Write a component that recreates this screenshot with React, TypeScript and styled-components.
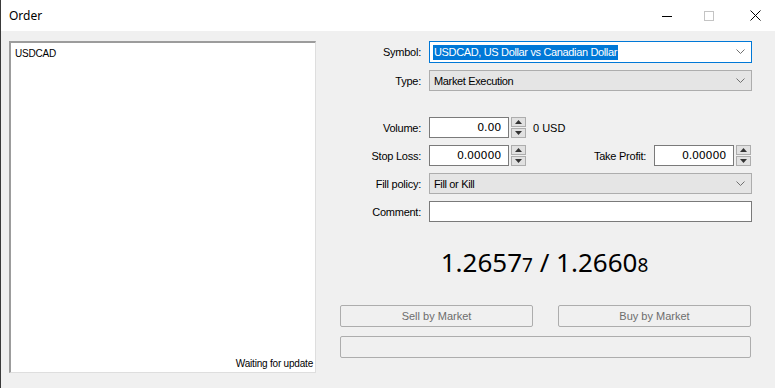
import React from "react";
import styled, { createGlobalStyle } from "styled-components";

const Global = createGlobalStyle`
  html, body { margin: 0; padding: 0; background: #f0f0f0; }
  body { font-family: "Liberation Sans", Arial, sans-serif; font-size: 11px; color: #000; }
  * { box-sizing: border-box; }
`;

const Window = styled.div`
  width: 775px;
  height: 388px;
  display: flex;
  flex-direction: column;
  background: #f0f0f0;
  border-left: 1px solid #3a3a3a;
  overflow: hidden;
`;

const TitleBar = styled.div`
  height: 31px;
  flex: none;
  background: #fff;
  display: flex;
  align-items: center;
  padding-left: 8px;
`;

const Title = styled.div`
  flex: 1;
  font-family: "Noto Sans", "Open Sans", sans-serif;
  font-size: 12px;
  color: #000;
`;

const WinButton = styled.div<{ $w: number; $pl?: number }>`
  width: ${(p) => p.$w}px;
  height: 31px;
  padding-left: ${(p) => p.$pl ?? 0}px;
  display: flex;
  align-items: center;
  justify-content: center;
`;

const Body = styled.div`
  flex: 1;
  display: flex;
  padding: 10px 23px 15px 8px;
  gap: 24px;
`;

const LeftPanel = styled.div`
  width: 307px;
  background: #fff;
  border-style: solid;
  border-width: 2px 1px 1px 2px;
  border-color: #9c9c9c #dedede #dedede #9c9c9c;
  display: flex;
  flex-direction: column;
  justify-content: space-between;
  padding: 4px 2px 2px 4px;
`;

const PanelText = styled.div<{ $right?: boolean }>`
  text-align: ${(p) => (p.$right ? "right" : "left")};
  font-size: 10px;
  letter-spacing: -0.2px;
  line-height: 13px;
`;

const RightCol = styled.div`
  flex: 1;
  display: flex;
  flex-direction: column;
`;

const Row = styled.div<{ $mt?: number }>`
  display: flex;
  align-items: center;
  height: 21px;
  margin-top: ${(p) => p.$mt ?? 7}px;
`;

const Label = styled.div<{ $w?: number }>`
  width: ${(p) => p.$w ?? 81}px;
  text-align: right;
  margin-right: 8px;
  flex: none;
  white-space: nowrap;
  letter-spacing: -0.25px;
`;

const Combo = styled.div<{ $focus?: boolean }>`
  flex: 1;
  height: ${(p) => (p.$focus ? 22 : 21)}px;
  display: flex;
  align-items: center;
  padding: 0 6px 0 3px;
  background: ${(p) => (p.$focus ? "#fff" : "#e5e5e5")};
  border: 1px solid ${(p) => (p.$focus ? "#0078d7" : "#adadad")};
`;

const ComboText = styled.span<{ $sel?: boolean }>`
  flex: 1;
  white-space: nowrap;
  letter-spacing: -0.35px;
  span {
    background: ${(p) => (p.$sel ? "#0078d7" : "transparent")};
    color: ${(p) => (p.$sel ? "#fff" : "#000")};
    padding: 1px 1px 2px 1px;
  }
`;

const TextInput = styled.div<{ $w?: number }>`
  width: ${(p) => (p.$w ? `${p.$w}px` : "auto")};
  flex: ${(p) => (p.$w ? "none" : "1")};
  height: 21px;
  background: #fff;
  border: 1px solid #7a7a7a;
  display: flex;
  align-items: center;
  justify-content: flex-end;
  padding: 0 7px;
  font-family: "DejaVu Sans", sans-serif;
  font-size: 11px;
  letter-spacing: -0.2px;
`;

const Spinner = styled.div`
  width: 15px;
  height: 21px;
  margin-left: 2px;
  flex: none;
  display: flex;
  flex-direction: column;
  gap: 1px;
`;

const SpinHalf = styled.div`
  flex: 1;
  background: #e1e1e1;
  border: 1px solid #adadad;
  display: flex;
  align-items: center;
  justify-content: center;
`;

const Suffix = styled.div`
  margin-left: 7px;
`;

const Spacer = styled.div<{ $w?: number }>`
  flex: ${(p) => (p.$w ? "none" : "1")};
  width: ${(p) => (p.$w ? `${p.$w}px` : "auto")};
`;

const Price = styled.div`
  margin-top: 25px;
  text-align: center;
  font-family: "Noto Sans", "Open Sans", sans-serif;
  font-size: 26px;
  line-height: 30px;
  color: #000;
  padding-right: 3px;
`;

const Small = styled.span`
  font-size: 19px;
`;

const Buttons = styled.div`
  margin-top: 25px;
  display: flex;
  gap: 25px;
  padding-right: 1px;
`;

const Btn = styled.div`
  flex: 1;
  height: 22px;
  border: 1px solid #adadad;
  border-radius: 2px;
  background: #f0f0f0;
  color: #6d6d6d;
  display: flex;
  align-items: center;
  justify-content: center;
`;

const Progress = styled.div`
  margin-top: 9px;
  margin-right: 1px;
  height: 22px;
  border: 1px solid #adadad;
  border-radius: 2px;
  background: #f0f0f0;
`;

const Chevron = () => (
  <svg width="9" height="5" viewBox="0 0 9 5">
    <path d="M0.5 0.5 L4.5 4.5 L8.5 0.5" fill="none" stroke="#707070" strokeWidth="1" />
  </svg>
);

const Spin = () => (
  <Spinner>
    <SpinHalf>
      <svg width="7" height="4" viewBox="0 0 7 4">
        <path d="M0 4 L3.5 0 L7 4 Z" fill="#333" />
      </svg>
    </SpinHalf>
    <SpinHalf>
      <svg width="7" height="4" viewBox="0 0 7 4">
        <path d="M0 0 L3.5 4 L7 0 Z" fill="#333" />
      </svg>
    </SpinHalf>
  </Spinner>
);

export default function App() {
  return (
    <>
      <Global />
      <Window>
        <TitleBar>
          <Title>Order</Title>
          <WinButton $w={44}>
            <svg width="10" height="10" viewBox="0 0 10 10">
              <path d="M0 5.5 H10" stroke="#000" strokeWidth="1" />
            </svg>
          </WinButton>
          <WinButton $w={40}>
            <svg width="10" height="10" viewBox="0 0 10 10">
              <rect x="0.5" y="0.5" width="9" height="9" fill="none" stroke="#c4c4c4" strokeWidth="1" />
            </svg>
          </WinButton>
          <WinButton $w={46} $pl={6}>
            <svg width="11" height="11" viewBox="0 0 11 11">
              <path d="M0.5 0.5 L10.5 10.5 M10.5 0.5 L0.5 10.5" stroke="#000" strokeWidth="1" />
            </svg>
          </WinButton>
        </TitleBar>
        <Body>
          <LeftPanel>
            <PanelText>USDCAD</PanelText>
            <PanelText $right>Waiting for update</PanelText>
          </LeftPanel>
          <RightCol>
            <Row $mt={0}>
              <Label>Symbol:</Label>
              <Combo $focus>
                <ComboText $sel>
                  <span>USDCAD, US Dollar vs Canadian Dollar</span>
                </ComboText>
                <Chevron />
              </Combo>
            </Row>
            <Row $mt={8}>
              <Label>Type:</Label>
              <Combo>
                <ComboText>
                  <span>Market Execution</span>
                </ComboText>
                <Chevron />
              </Combo>
            </Row>
            <Row $mt={26}>
              <Label>Volume:</Label>
              <TextInput $w={80}>0.00</TextInput>
              <Spin />
              <Suffix>0 USD</Suffix>
            </Row>
            <Row>
              <Label>Stop Loss:</Label>
              <TextInput $w={80}>0.00000</TextInput>
              <Spin />
              <Spacer />
              <Label $w={100}>Take Profit:</Label>
              <TextInput $w={80}>0.00000</TextInput>
              <Spin />
              <Spacer $w={1} />
            </Row>
            <Row>
              <Label>Fill policy:</Label>
              <Combo>
                <ComboText>
                  <span>Fill or Kill</span>
                </ComboText>
                <Chevron />
              </Combo>
            </Row>
            <Row>
              <Label>Comment:</Label>
              <TextInput />
            </Row>
            <Price>
              1.2657<Small>7</Small> / 1.2660<Small>8</Small>
            </Price>
            <Buttons>
              <Btn>Sell by Market</Btn>
              <Btn>Buy by Market</Btn>
            </Buttons>
            <Progress />
          </RightCol>
        </Body>
      </Window>
    </>
  );
}
